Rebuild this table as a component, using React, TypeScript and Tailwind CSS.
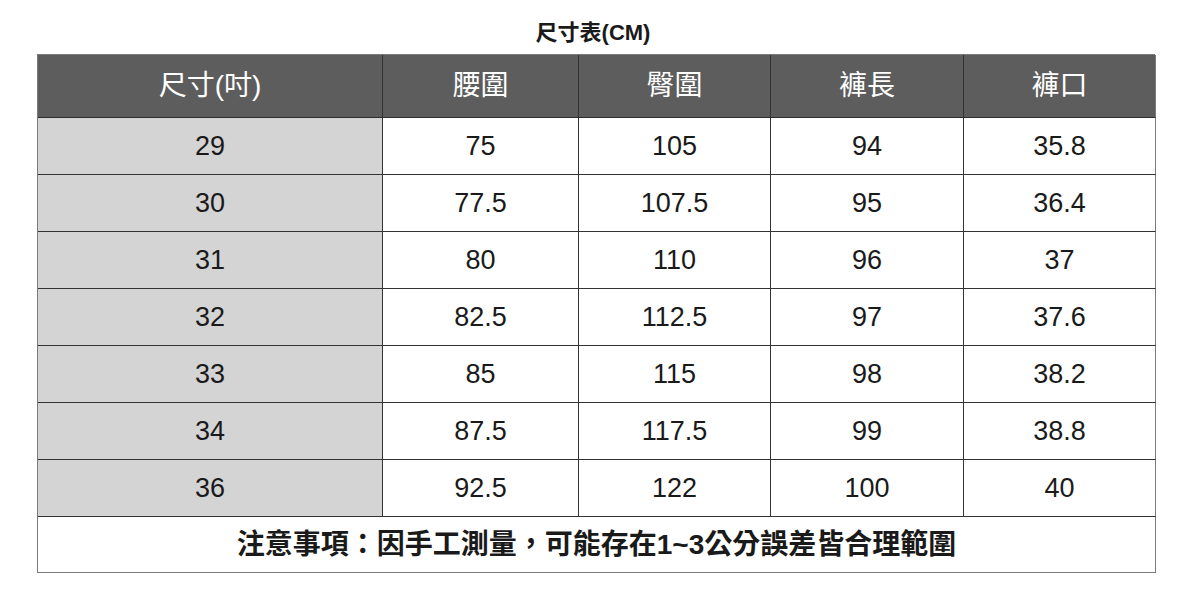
import React from "react";

const headers = ["尺寸(吋)", "腰圍", "臀圍", "褲長", "褲口"];
const rows = [
  ["29", "75", "105", "94", "35.8"],
  ["30", "77.5", "107.5", "95", "36.4"],
  ["31", "80", "110", "96", "37"],
  ["32", "82.5", "112.5", "97", "37.6"],
  ["33", "85", "115", "98", "38.2"],
  ["34", "87.5", "117.5", "99", "38.8"],
  ["36", "92.5", "122", "100", "40"],
];

export default function App() {
  return (
    <div
      className="w-[1186px] h-[600px] bg-white px-[37px] text-[#1a1a1a]"
      style={{ fontFamily: '"Liberation Sans", "Noto Sans CJK TC", sans-serif' }}
    >
      <div className="h-[54px] pt-[12px] flex items-center justify-center text-[22px] font-bold leading-none">
        尺寸表(CM)
      </div>
      <div className="w-[1118px] border-t border-l border-[#7a7a7a] grid grid-cols-[345px_196px_192px_193px_192px]">
        {headers.map((h, i) => (
          <div
            key={h}
            className={`h-[63px] flex items-center justify-center bg-[#5d5d5d] text-white text-[28px] leading-none border-b border-[#2e2e2e] ${
              i < 4 ? "border-r border-r-[#333333]" : "border-r border-r-[#7a7a7a]"
            }`}
          >
            {h}
          </div>
        ))}
        {rows.map((r) =>
          r.map((c, i) => (
            <div
              key={r[0] + "-" + i}
              className={`h-[57px] flex items-center justify-center text-[27px] leading-none border-b border-[#333333] ${
                i === 0 ? "bg-[#d4d4d4]" : "bg-white"
              } ${i < 4 ? "border-r border-r-[#333333]" : "border-r border-r-[#7a7a7a]"}`}
            >
              {c}
            </div>
          ))
        )}
        <div className="col-span-5 h-[56px] flex items-center justify-center bg-white text-[28px] font-bold leading-none border-b border-r border-[#7a7a7a]">
          注意事項：因手工測量，可能存在1~3公分誤差皆合理範圍
        </div>
      </div>
    </div>
  );
}
